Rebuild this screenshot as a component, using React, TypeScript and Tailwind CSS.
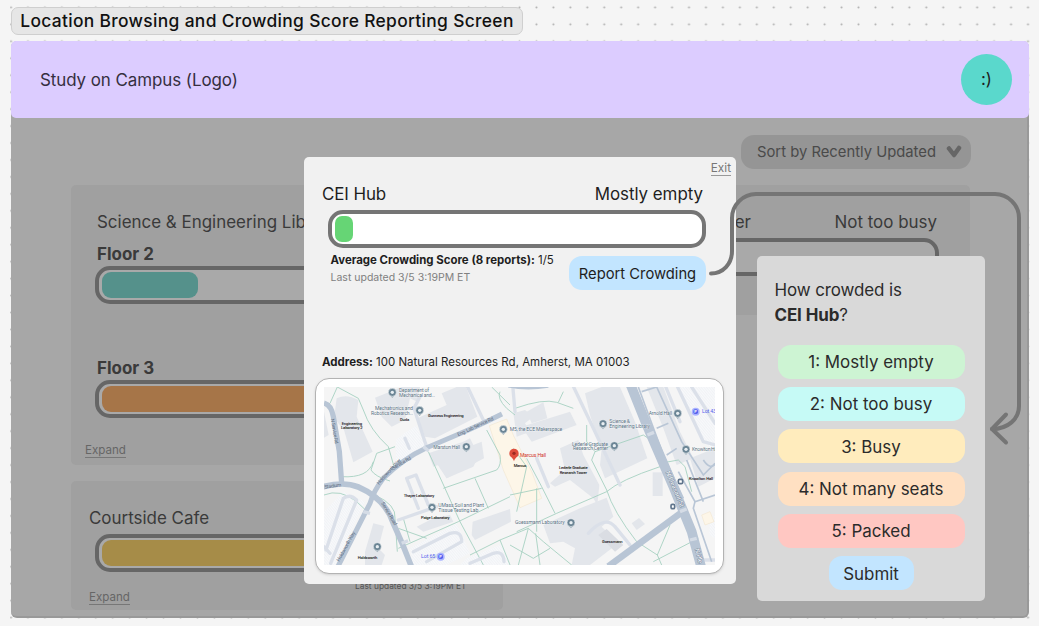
import React from "react";

const ratings = [
  { label: "1: Mostly empty", tone: "bg-[#cdf4d3]" },
  { label: "2: Not too busy", tone: "bg-[#c6faf6]" },
  { label: "3: Busy", tone: "bg-[#ffecbd]" },
  { label: "4: Not many seats", tone: "bg-[#ffe0c2]" },
  { label: "5: Packed", tone: "bg-[#ffc7c2]" },
];

function DimBar({ fill }: { fill?: string }) {
  return (
    <div className="h-[38px] rounded-[15px] border-4 border-[#666] bg-[#a9a9a9] px-[3px] py-[2px]">
      {fill && <div className={`h-[26px] rounded-[9px] ${fill}`} />}
    </div>
  );
}

function Marker({ x, y }: { x: number; y: number }) {
  return (
    <g>
      <path d={`M${x - 8} ${y + 8}L${x} ${y + 17}L${x + 8} ${y + 8}Z`} fill="#9fb0ba" />
      <circle cx={x} cy={y} r="12" fill="#6b8595" stroke="#fff" strokeWidth="1.5" />
      <circle cx={x} cy={y} r="5" fill="#e8eef2" />
    </g>
  );
}

function CampusMap() {
  return (
    <svg viewBox="42 126 1173 534" preserveAspectRatio="none" className="h-[178px] w-[391px]">
      <defs>
        <pattern id="lot" width="6" height="6" patternUnits="userSpaceOnUse" patternTransform="rotate(-40)">
          <rect width="6" height="6" fill="#f8f9fb" />
          <path d="M0 0V6" stroke="#e5e9ee" strokeWidth="2" />
        </pattern>
      </defs>
      <rect x="42" y="126" width="1173" height="534" fill="#f5f5f5" />
      {/* parking lots */}
      <g fill="url(#lot)">
        <path d="M318 242L345 300L258 355V285Q285 260 318 242Z" />
        <path d="M42 500L100 440L165 470L75 660H42Z" />
        <path d="M300 610L440 535L480 625L410 660H308Z" />
        <path d="M470 640L575 598L600 660H450Z" />
        <path d="M1100 126H1215V320L1180 290Z" />
        <path d="M1200 520L1215 510V580L1198 570Z" />
      </g>
      {/* buildings */}
      <g fill="#e3e6eb">
        <path d="M80 160Q110 145 145 165L140 215L188 320L130 352L102 255L72 220Z" />
        <path d="M42 200L56 270L42 278Z" />
        <path d="M195 158L275 126H330L322 170L300 160L285 225L245 245L215 215Z" />
        <path d="M322 220L410 180L395 145L440 126H468L502 215L375 280L345 275Z" />
        <path d="M355 325L460 290L480 280L490 300L515 290L522 340L410 400L385 360L370 365Z" />
        <path d="M610 205L645 195L670 215L645 235L660 260L620 275Z" />
        <path d="M650 200L700 172L712 220L665 235Z" />
        <path d="M635 245L780 200L800 240L665 290Z" />
        <path d="M750 310L805 285L820 330L868 420L862 480L850 460L780 405L735 425L720 415L765 375Z" />
        <path d="M825 145L875 126H930L975 230L1000 305L1012 340L885 400L870 360L875 310L850 240L840 210Z" />
        <path d="M1010 126H1060L1110 260L1150 340L1100 360L1060 250Z" />
        <path d="M1140 340L1215 310V400L1165 425Z" />
        <path d="M700 540L810 490L890 458L910 515L875 545L925 595L840 660H785L795 610L760 590L720 595Z" />
        <path d="M1028 382H1058V453H1028Z" />
        <path d="M965 535L987 519L1005 537L980 555Z" />
        <path d="M320 545L370 520L420 510L430 530L340 560Z" />
        <path d="M190 535L222 543L205 610L225 630L215 660H165V620Z" />
        <path d="M488 530L600 492L603 530L495 585L485 570Z" />
        <path d="M380 355L500 345L490 365L410 400Z" />
      </g>
      <path d="M865 570L890 552L940 600L915 620Z" fill="#dadde3" />
      <path d="M538 242L590 222L612 275L665 380L695 460L630 488L580 375Z" fill="#fdf6e8" stroke="#f0e3c8" strokeWidth="1.5" />
      <path d="M1175 510L1200 500L1212 530L1185 540Z" fill="#fdf6e8" stroke="#f0e3c8" strokeWidth="1.5" />
      {/* footpaths */}
      <g fill="none" stroke="#a3d0bf" strokeWidth="2.6">
        <path d="M82 126L60 175L42 182M82 126L145 160L160 195Q180 255 235 305L255 375" />
        <path d="M255 305L200 325L183 375Q195 395 240 408" />
        <path d="M95 395Q175 400 190 350" />
        <path d="M42 450Q90 430 140 470L172 500" />
        <path d="M355 320L405 430L450 530L520 660" />
        <path d="M195 450Q260 480 255 520L262 620M265 610L445 530L600 455M400 430L560 375Q575 360 570 330L530 255" />
        <path d="M495 400L535 490M600 450L695 430M570 140Q560 160 590 190L615 210M545 126L600 180" />
        <path d="M480 630L570 585L655 550L700 590L785 660M655 550L625 660M677 565L690 660M570 585L600 660M600 600L670 640L720 610" />
        <path d="M615 190Q700 160 740 172L790 190M745 172L760 140M830 240V290L855 320L845 345L890 435Q910 500 980 590L1042 630L1080 540M1042 630L1055 660" />
        <path d="M620 560L740 505L890 440Q930 405 1050 365M735 505L695 425L650 340M680 430L680 560M1050 355L1105 345L1125 365L1145 440" />
        <path d="M855 320L1000 270L1045 300M1030 650L1165 580M610 310L650 365L620 500M265 550L350 580M280 520L300 590" />
      </g>
      {/* service roads */}
      <g fill="none" stroke="#dbe0e9" strokeWidth="10" strokeLinecap="round" strokeLinejoin="round">
        <path d="M470 120L520 225M330 155L312 190L348 300M285 280L298 310" />
        <path d="M608 120L615 200" />
        <path d="M788 120L855 260L930 420M680 340L715 425" />
        <path d="M1065 120L1110 230M1100 120L1180 290L1215 300M1145 126L1215 235" />
        <path d="M290 400L318 390L355 480M290 400L325 490M265 525L380 485" />
        <path d="M48 615L100 460Q120 445 140 465L62 655M42 605L60 625" />
        <path d="M310 620L420 565Q455 555 455 590L350 650" />
        <path d="M480 655L550 625Q580 615 582 650" />
        <path d="M835 565Q885 510 915 545L960 600" />
        <path d="M1170 645H1215" />
      </g>
      <g fill="none" stroke="#b9c6d6" strokeWidth="5">
        <path d="M985 126L1060 330L1120 460M995 140L1040 126L1115 290L1180 390L1215 355M1040 250L1075 235M1070 330L1100 310" />
        <path d="M1105 380L1155 470L1215 450M1155 470L1150 490L1205 650" />
        <path d="M1130 345L1180 470M1180 345Q1200 375 1215 358" />
      </g>
      {/* main roads */}
      <g fill="none" stroke="#b8c5d5" strokeLinecap="butt">
        <path d="M42 174Q64 180 70 215L88 320L95 415" strokeWidth="16" />
        <path d="M36 426Q100 408 145 426Q225 460 250 535Q280 600 304 664" strokeWidth="17" />
        <path d="M576 207Q500 245 440 270L350 308Q280 340 220 400Q190 440 180 475L84 664" strokeWidth="15" />
        <path d="M895 664L1115 502" strokeWidth="20" />
        <path d="M960 115L1010 240L1090 425L1145 560L1173 664" strokeWidth="29" />
        <path d="M595 124Q650 135 715 125" strokeWidth="7" />
      </g>
      <path d="M1012 270L1032 262M1110 500L1130 492M1140 585L1160 580M160 500L180 505M275 595L294 587M340 305L356 318" stroke="#d5dce6" strokeWidth="10" />
      {/* street names */}
      <g fill="#5f6f82" fontFamily="Roboto, sans-serif" fontSize="15" letterSpacing="-.8">
        <text transform="translate(445 274) rotate(-25)">Eng. Lab Service Rd</text>
        <text transform="translate(62 222) rotate(80)">N Service Rd</text>
        <text transform="translate(250 375) rotate(-31)">Service Rd</text>
        <text transform="translate(207 420) rotate(-48)">Holdsworth Way</text>
        <text transform="translate(88 650) rotate(-61)">Holdsworth Way</text>
        <text transform="translate(213 475) rotate(59)">Service Road</text>
        <text transform="translate(44 431) rotate(-8)">Stadium</text>
      </g>
      <g fill="#fff" stroke="#74859a" strokeWidth="2.5" paintOrder="stroke" fontFamily="Roboto, sans-serif" fontSize="19">
        <text transform="translate(1067 382) rotate(67)">N Pleasant St</text>
        <text transform="translate(1155 612) rotate(76)">N Ple</text>
      </g>
      {/* places */}
      <Marker x={247} y={142} />
      <Marker x={329} y={196} />
      <Marker x={469} y={305} />
      <Marker x={580} y={253} />
      <Marker x={366} y={487} />
      <Marker x={202} y={605} />
      <Marker x={879} y={236} />
      <Marker x={913} y={302} />
      <Marker x={1103} y={205} />
      <Marker x={1128} y={313} />
      <Marker x={783} y={533} />
      <g fill="#fff" stroke="#60758c" strokeWidth="5">
        <rect x="1105" y="403" width="13" height="13" rx="4" />
        <rect x="1083" y="478" width="11" height="13" rx="4" />
      </g>
      <g fill="#566f81" stroke="#fff" strokeWidth="1" paintOrder="stroke" fontFamily="Roboto, sans-serif" fontSize="15.5">
        <text x="267" y="140" textLength="90">Department of</text>
        <text x="267" y="155" textLength="108">Mechanical and...</text>
        <text x="195" y="195" textLength="114">Mechatronics and</text>
        <text x="183" y="209" textLength="126">Robotics Research...</text>
        <text x="370" y="311" textLength="80">Marston Hall</text>
        <text x="599" y="258" textLength="158">M5, the ECE Makerspace</text>
        <text x="385" y="486" textLength="137">UMass Soil and Plant</text>
        <text x="385" y="500" textLength="120">Tissue Testing Lab</text>
        <text x="898" y="235" textLength="62">Science &amp;</text>
        <text x="898" y="249" textLength="122">Engineering Library</text>
        <text x="786" y="302" textLength="108">Lederle Graduate</text>
        <text x="789" y="316" textLength="105">Research Center</text>
        <text x="1016" y="210" textLength="70">Arnold Hall</text>
        <text x="1146" y="319" textLength="80">Knowlton Hall</text>
        <text x="615" y="538" textLength="149">Goessmann Laboratory</text>
      </g>
      <g fill="#1a1a1a" fontFamily="Roboto, sans-serif" fontSize="12.5" fontWeight="500">
        <text x="95" y="240" textLength="61">Engineering</text>
        <text x="93" y="251" textLength="65">Laboratory 2</text>
        <text x="270" y="227" textLength="28">Duda</text>
        <text x="354" y="217" textLength="107">Gunness Engineering</text>
        <text x="611" y="367" textLength="38">Marcus</text>
        <text x="281" y="456" textLength="92">Thayer Laboratory</text>
        <text x="333" y="522" textLength="86">Paige Laboratory</text>
        <text x="143" y="641" textLength="59">Holdsworth</text>
        <text x="747" y="373" textLength="86">Lederle Graduate</text>
        <text x="749" y="386" textLength="82">Research Tower</text>
        <text x="1137" y="404" textLength="72">Knowlton Hall</text>
        <text x="876" y="593" textLength="62">Goessmann</text>
      </g>
      <g fill="#5663ed" fontFamily="Roboto, sans-serif" fontSize="16">
        <text x="1176" y="205" textLength="42">Lot 43</text>
        <text x="333" y="640" textLength="43">Lot 65</text>
        <circle cx="1157" cy="200" r="12" fill="#a9b2ff" />
        <rect x="1150" y="193" width="14" height="14" rx="5" />
        <circle cx="392" cy="635" r="12" fill="#a9b2ff" />
        <rect x="385" y="628" width="14" height="14" rx="5" />
        <g fill="#fff" fontSize="12" fontWeight="700">
          <text x="1153" y="205">P</text>
          <text x="388" y="640">P</text>
        </g>
      </g>
      <path d="M612 349C608 335 598 338 598 325A14 14 0 0 1 626 325C626 338 616 335 612 349Z" fill="#df4e3d" />
      <circle cx="612" cy="325" r="5" fill="#9d2b22" />
      <text x="630" y="335" textLength="78" fill="#d03426" fontFamily="Roboto, sans-serif" fontSize="15.5">
        Marcus Hall
      </text>
    </svg>
  );
}

function HubModal() {
  return (
    <section className="absolute left-[304px] top-[157px] flex h-[427px] w-[432px] flex-col rounded-[5px] bg-[#f1f1f1]">
      <div className="flex h-[23px] justify-end pr-[5px] pt-[3px]">
        <button className="h-[16px] border-b border-[#999] text-[11.8px] leading-[17px] text-[#777]">Exit</button>
      </div>
      <div className="mt-[3px] flex h-[24px] items-center justify-between pl-[18px] pr-[33px] text-[16.95px]">
        <h2 className="tracking-[-0.1px]">CEI Hub</h2>
        <span className="tracking-[-0.05px]">Mostly empty</span>
      </div>
      <div className="ml-6 mt-[3px] h-[38px] w-[378px] rounded-[15px] border-4 border-[#757575] bg-white px-[3px] py-[2px]">
        <div className="h-[26px] w-[18px] rounded-[7px] bg-[#66d575]" />
      </div>
      <div className="flex h-[48px] justify-between pl-[26.5px] pr-[30px] pt-1">
        <div className="whitespace-nowrap text-[11.45px] leading-[18px]">
          <p className="leading-[17px]"><b className="font-bold">Average Crowding Score (8 reports):</b> 1/5</p>
          <p className="text-[10.5px] text-[#808080]">Last updated 3/5 3:19PM ET</p>
        </div>
        <button className="mt-1 h-[34px] w-[137px] shrink-0 rounded-[13px] bg-[#c2e5ff] pt-[2px] text-[14.75px]">Report Crowding</button>
      </div>
      <p className="mt-[57px] h-[18px] whitespace-nowrap pl-[18px] text-[11.5px] leading-[18px]">
        <b className="font-bold">Address:</b> 100 Natural Resources Rd, Amherst, MA 01003
      </p>
      <div className="ml-[11px] mt-[7px] flex h-[196px] w-[409px] items-center justify-center rounded-[14px] border border-[#b3b3b3] bg-white shadow-sm">
        <CampusMap />
      </div>
    </section>
  );
}

function RatingPopup() {
  return (
    <section className="absolute left-[757px] top-[256px] flex h-[345px] w-[228px] flex-col items-center rounded-[5px] bg-[#d9d9d9] text-[16.95px] text-[#2b2b2b]">
      <p className="mt-[22px] h-[50px] w-full pl-[17.5px] leading-[25px] tracking-[-0.1px]">
        How crowded is<br /><b className="font-bold">CEI Hub</b>?
      </p>
      <div className="mt-[16.5px] flex flex-col gap-[8.4px]">
        {ratings.map((r) => (
          <button key={r.label} className={`h-[34px] w-[187px] rounded-[13px] pt-[2px] ${r.tone}`}>{r.label}</button>
        ))}
      </div>
      <button className="mt-[8.4px] h-[34px] w-[85px] rounded-[13px] bg-[#c2e5ff] pt-[2px]">Submit</button>
    </section>
  );
}

export default function App() {
  return (
    <div className="relative h-[626px] w-[1039px] overflow-hidden bg-[#f5f5f5] font-['Inter',sans-serif] text-[#1e1e1e]">
      <svg className="absolute inset-0 h-full w-full">
        <defs>
          <pattern id="dots" x="2.53" y="-1.07" width="16.95" height="16.95" patternUnits="userSpaceOnUse">
            <circle cx="8.47" cy="8.47" r="1.05" fill="#b0b0b0" />
          </pattern>
        </defs>
        <rect x="10" y="5" width="1020" height="614" fill="url(#dots)" />
      </svg>
      <div className="relative flex flex-col pl-[11px] pt-[7px]">
        <h1 className="flex h-[28px] w-[512px] items-center justify-center whitespace-nowrap rounded-[7px] border border-[#cfcfcf] bg-[#e6e6e6] text-[17px] font-medium tracking-[0.53px] text-[#111]">
          <span className="text-[17.4px] tracking-[0.33px]">Location Browsing and Crowding Score Reporting Screen</span>
        </h1>
        <main className="mt-[6px] h-[577px] w-[1018px] rounded-[6px] border-b-2 border-r-2 border-[#999] bg-[#a7a7a7]">
          <header className="flex h-[77px] w-[1018px] items-center justify-between rounded-[5px] bg-[#dcccff] pl-[29px] pr-[17px] text-[16.95px] text-[#352f3e]">
            <span className="pt-[2px] tracking-[-0.07px]">Study on Campus (Logo)</span>
            <span className="flex size-[51px] items-center justify-center rounded-full bg-[#5ad8cc] pt-px text-[#1e1e1e]">:)</span>
          </header>
          <div className="flex h-[67px] justify-end pr-[56px] pt-[16.5px]">
            <button className="flex h-[34px] w-[230px] items-center gap-[10px] rounded-[13px] bg-[#959595] pl-4 text-[14.8px] text-[#4a4a4a]">
              <span className="whitespace-nowrap pt-[2px]">Sort by Recently Updated</span>
              <svg viewBox="0 0 16 14" className="h-[14px] w-4"><path d="M3 3.5L8 10L13 3" fill="none" stroke="#666" strokeWidth="4.5" strokeLinecap="round" strokeLinejoin="round" /></svg>
            </button>
          </div>
          <div className="flex items-start justify-between pl-[60px] pr-[57px] text-[16.95px] text-[#3a3a3a]">
            <div className="flex w-[432px] flex-col gap-4">
              <article className="h-[280px] rounded-[5px] bg-[#a0a0a0] pl-[24px] pr-[30px] pt-[25px]">
                <h3 className="pl-[2px] leading-6">Science &amp; Engineering Library</h3>
                <h4 className="mt-2 pl-[2px] font-bold leading-6">Floor 2</h4>
                <DimBar fill="w-[96px] bg-[#55918b]" />
                <h4 className="mt-[52px] pl-[2px] font-bold leading-6">Floor 3</h4>
                <DimBar fill="w-[300px] bg-[#a67548]" />
                <span className="-ml-[10px] mt-[24px] inline-block h-[16px] border-b border-[#777] text-[11.6px] leading-4 text-[#666]">Expand</span>
              </article>
              <article className="h-[129px] rounded-[5px] bg-[#a0a0a0] pl-[24px] pr-[30px] pt-[25px]">
                <h3 className="-ml-[6px] mb-[4px] leading-6">Courtside Cafe</h3>
                <DimBar fill="w-[240px] bg-[#a68c48]" />
                <div className="-ml-[6px] mt-[4px] flex items-start">
                  <span className="mt-[13px] h-[16px] border-b border-[#777] text-[11.6px] leading-4 text-[#666]">Expand</span>
                  <span className="ml-[225px] mt-px whitespace-nowrap text-[8.4px] leading-[18px] text-[#555]">Last updated 3/5 3:19PM ET</span>
                </div>
              </article>
            </div>
            <article className="h-[130px] w-[432px] rounded-[5px] bg-[#a0a0a0] pl-[26px] pr-[31px] pt-[25px]">
              <div className="mb-[4px] flex justify-between leading-6">
                <h3 className="w-[187px] whitespace-nowrap text-right">Student Center</h3>
                <span className="pr-[2px]">Not too busy</span>
              </div>
              <DimBar />
            </article>
          </div>
        </main>
      </div>
      <HubModal />
      <RatingPopup />
      <svg className="pointer-events-none absolute inset-0 h-full w-full" fill="none" stroke="#757575" strokeWidth="4" strokeLinecap="round" strokeLinejoin="round">
        <path d="M711 273.5C723 273.5 732 264 732 251V218C732 205 743 194 756 194H995C1008 194 1019 205 1019 218V406C1019 419 1008 429 992 429" />
        <path d="M1006 414.5L992 429L1006 442.5" />
      </svg>
    </div>
  );
}
